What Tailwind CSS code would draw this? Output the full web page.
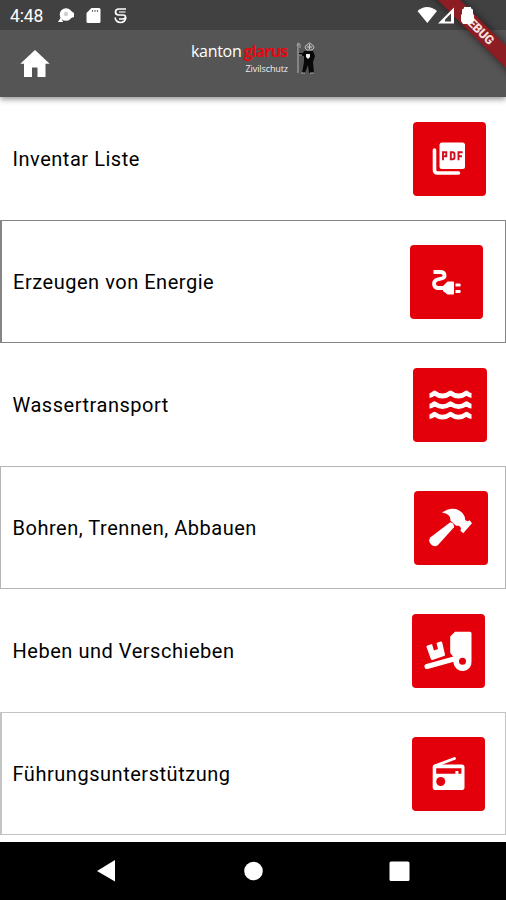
<!DOCTYPE html>
<html lang="de">
<head>
<meta charset="utf-8">
<title>Kanton Glarus Zivilschutz</title>
<script src="https://cdn.jsdelivr.net/npm/@tailwindcss/browser@4"></script>
</head>
<body class="relative flex h-[900px] w-[506px] flex-col overflow-hidden bg-white font-['Roboto',sans-serif] text-black">
<header class="relative z-10 h-[97px] shrink-0 bg-[#555] shadow-[0_2px_6px_rgba(0,0,0,0.45)]">
  <div class="flex h-[30px] items-center bg-[#414141] pl-[10px] text-white">
    <span class="w-[47px] pt-[1px] text-[17.5px] leading-[30px] tracking-[-0.1px]">4:48</span>
    <svg class="h-[18px] w-[18px]" viewBox="0 0 18 18"><circle cx="9" cy="8.500" r="6.300" fill="#fff"/><path d="M4 11 1 16h5zM14 5l3 2v4l-3 1z" fill="#fff"/><circle cx="9" cy="8" r="2.200" fill="#d0d0d0"/></svg>
    <svg class="ml-[11px] h-[17px] w-[15px]" viewBox="0 0 15 17"><path d="M5.500 1H13q1.500 0 1.500 1.500v12Q14.500 16 13 16H2Q.5 16 .5 14.500V6z" fill="#fff"/><path d="M6.500 3v2M9 3v2M11.500 3v2" stroke="#777" stroke-width="1.200"/></svg>
    <svg class="ml-[12px] h-[17px] w-[15px]" viewBox="0 0 15 17" fill="none" stroke="#fff" stroke-width="1.700"><path d="M13 2H6Q2.500 2 2.500 5T6 8h4q2.500 0 2.500 2T10 12H6"/><path d="M2 10.500Q3 15.500 7.500 15.500t5.500-5" stroke-width="1.500"/><path d="M6 5h6.500" stroke-width="1.100"/></svg>
  </div>
  <div class="flex h-[67px] items-center">
    <svg class="ml-[20px] h-[28px] w-[30px]" viewBox="0 0 30 28"><path d="M15 0 .3 13.700h3.700V27h8v-9.500h5.500V27h8V13.700h4.200z" fill="#fff"/></svg>
    <div class="ml-[141px] mt-[-11px] flex w-[98px] flex-col font-['Open_Sans',sans-serif]">
      <div class="whitespace-nowrap text-[16px] leading-[20px] tracking-[-0.3px] text-white">kanton<span class="ml-[2px] font-bold tracking-[-0.9px] text-[#e20a12]">glarus</span></div>
      <div class="mt-[2px] pr-[1px] text-right text-[9px] leading-[12px] tracking-[-0.1px] text-[#eee]">Zivilschutz</div>
    </div>
    <svg class="ml-[7px] mt-[-10px] h-[34px] w-[20px]" viewBox="0 0 20 34"><path d="M2 2v29" stroke="#a5a5a5" stroke-width="1.200"/><path d="M1 4 2 1l2 1v4" fill="none" stroke="#aaa"/><path d="M9 6q0-3 2-3 1-2 2.500-2T16 3q2 0 2 3l-2 2h-5z" fill="#666" stroke="#bbb" stroke-width="1"/><path d="M11 5h5M13.500 2v5" stroke="#ddd" stroke-width=".8"/><path d="M8 9h9l2 5-2 6 1 11h-5l-1-8-3 8H6l2-11v-6l-5-1v-2h4z" fill="#080808"/><path d="M10 12h4v3l-2 2-2-2z" fill="#eee"/><path d="M3 13h3M5 31h4M14 31h4" stroke="#aaa"/></svg>
  </div>
  <div class="absolute right-0 top-0 h-[97px] w-[97px] overflow-hidden">
    <div class="absolute left-[-1px] top-[21px] flex h-[16px] w-[140px] rotate-45 items-center justify-center bg-[#8c1d22] text-[12.5px] font-black tracking-[-0.3px] text-[#f4dede] shadow-[0_0_8px_rgba(0,0,0,0.6)]">DEBUG</div>
  </div>
  <svg class="absolute left-[416px] top-[6px] h-[20px] w-[60px]" viewBox="0 0 60 20"><path d="M1.500 5Q11-3 21 5L11.300 17z" fill="#fff"/><path d="M22 17.500 38 1.500v16z" fill="#fff"/><path d="M29 15.500V13.500l6-6v8z" fill="#414141"/><path d="M46 4.500q0-2 2-2V1h7v1.500q2 0 2 2V8l1 1v5l-3 4h-8l-2-3V9l1-1z" fill="#fff"/></svg>
</header>

<main class="h-[745px] shrink-0 text-[20px] leading-[24px] tracking-[0.53px] text-black">
  <div class="flex h-[123px] items-center justify-between pl-[12.500px] pr-[20px]">
    <span>Inventar Liste</span>
    <svg class="h-[74px] w-[73px] rounded-[4px] bg-[#e3000b]" viewBox="0 0 73 74"><rect x="26.500" y="20.500" width="25.500" height="26.500" rx="2.500" fill="#fff"/><path d="M21.500 28v20q0 3 3 3h21" fill="none" stroke="#fff" stroke-width="3.600" stroke-linecap="round"/><g fill="none" stroke="#d01020" stroke-width="1.900"><path d="M30 38.300v-8h3.300v4H30M37.800 30.300v7h2q1.700 0 1.700-2v-3q0-2-1.700-2zM45.500 38.300v-8h4.200M45.500 34.300H49"/></g></svg>
  </div>
  <div class="flex h-[123px] items-center justify-between border border-l-2 border-[#858585] pl-[11px] pr-[22px]">
    <span>Erzeugen von Energie</span>
    <svg class="h-[74px] w-[73px] rounded-[4px] bg-[#e3000b]" viewBox="0 0 73 74"><path d="M23.500 27H30c5.500 0 6 5.500 1.500 6.500l-4 1c-5 1.300-4.500 8.500 1 8.500h6" fill="none" stroke="#fff" stroke-width="3.800"/><path d="M33 41l4.500-4.500H43q1 0 1 1v11q0 1-1 1h-5.500L33 46zM45.500 38.500h4q1.300 0 1.300 1.500t-1.300 1.500h-4zM45.500 45h4q1.300 0 1.300 1.400t-1.300 1.500h-4z" fill="#fff"/></svg>
  </div>
  <div class="flex h-[123px] items-center justify-between pl-[12.500px] pr-[19px]">
    <span>Wassertransport</span>
    <svg class="h-[74px] w-[74px] rounded-[4px] bg-[#e3000b]" viewBox="0 0 74 74"><g fill="none" stroke="#fff" stroke-width="4.800" stroke-linejoin="round"><path id="wave" d="M16.500 27.500q2 0 5-2.500 4 3 8 3t8-3q4 3 8 3t8-3q3 2.500 5 2.500"/><use href="#wave" y="10.600"/><use href="#wave" y="21.200"/></g></svg>
  </div>
  <div class="flex h-[123px] items-center justify-between border border-[#b5b5b5] pl-[11.500px] pr-[17px]">
    <span>Bohren, Trennen, Abbauen</span>
    <svg class="h-[74px] w-[74px] rounded-[4px] bg-[#e3000b]" viewBox="0 0 74 74"><path d="M36 31.500q1.500-.5 3 1.300t1 3.400L24 54q-3.500 3-7-.7t-.5-7z" fill="#fff"/><path d="M28 21.500Q35 16.500 42 18q7 2.500 8.800 8l.5 3.200 2.500 1 1.800-1 2.400 3-8.800 10-2.700-2.500.5-2.600-2-2.400h-3l-5.500-5q.5-7-8.500-8.200z" fill="#fff"/></svg>
  </div>
  <div class="flex h-[123px] items-center justify-between pl-[12.500px] pr-[21px]">
    <span>Heben und Verschieben</span>
    <svg class="h-[74px] w-[73px] rounded-[4px] bg-[#e3000b]" viewBox="0 0 73 74"><path d="M15.500 31.500 20 30l2 6.500 4-1.500-1.500-6 4-1.500q1.300-.3 1.700 1L33 40.500q.3 1.200-1 1.600L20.500 46q-1.300.3-1.700-1L14.500 33q-.3-1.200 1-1.500z" fill="#fff"/><path d="M15 52.500 42 45" stroke="#fff" stroke-width="5" stroke-linecap="round"/><path fill-rule="evenodd" d="M43 17.700h15q1.500 0 1.500 1.500V47a9 9 0 0 1-18 2v-6L38.200 39V22.500zM50.500 43.700a3.500 3.500 0 1 0 0 7a3.500 3.500 0 1 0 0-7z" fill="#fff"/></svg>
  </div>
  <div class="flex h-[123px] items-center justify-between border border-l-2 border-[#c4c4c4] pl-[10.500px] pr-[20px]">
    <span>Führungsunterstützung</span>
    <svg class="h-[74px] w-[73px] rounded-[4px] bg-[#e3000b]" viewBox="0 0 73 74"><rect x="20.700" y="27.500" width="31.800" height="25.500" rx="2.800" fill="#fff"/><path d="m22.500 29 20-7.500" stroke="#fff" stroke-width="2.800" stroke-linecap="round"/><path d="M24.200 31.300h25.200v5.400h-3V34h-3v2.700H24.200z" fill="#e3000b"/><circle cx="28.700" cy="44.500" r="4.500" fill="#e3000b"/></svg>
  </div>
</main>

<nav class="h-[58px] shrink-0 bg-black">
  <svg class="h-[58px] w-[506px]" viewBox="0 0 506 58" fill="#fff"><path d="M97 29 115 18v21.500z"/><circle cx="253.500" cy="29" r="9.300"/><rect x="389.500" y="19.500" width="20" height="19.500" rx="1.500"/></svg>
</nav>
</body>
</html>
